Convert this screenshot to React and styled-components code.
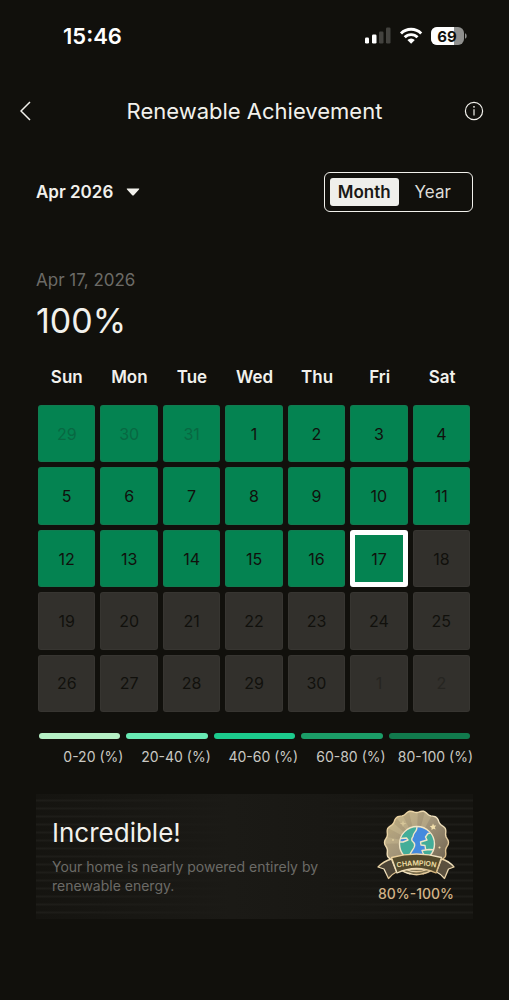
import { useState } from 'react'
import styled, { createGlobalStyle } from 'styled-components'

const weekdays = ['Sun', 'Mon', 'Tue', 'Wed', 'Thu', 'Fri', 'Sat']

// one entry per cell, starting on Sunday Mar 29
const days = Array.from({ length: 35 }, (_, i) => {
    const date = new Date(2026, 2, 29 + i)
    return {
        id: i,
        label: date.getDate(),
        outside: date.getMonth() !== 3,
        filled: i < 20,
    }
})

const levels = [
    { label: '0-20 (%)', color: '#b5f0c5' },
    { label: '20-40 (%)', color: '#68eab4' },
    { label: '40-60 (%)', color: '#1ccb8d' },
    { label: '60-80 (%)', color: '#1b9d68' },
    { label: '80-100 (%)', color: '#117a4d' },
]

const scallop = (cx, cy, radius, depth, lobes) => {
    const points = []
    for (let i = 0; i < 140; i++) {
        const a = (i / 140) * Math.PI * 2
        const r = radius + depth * Math.cos(lobes * (a + Math.PI / 2 + Math.PI / lobes))
        points.push(`${(cx + r * Math.cos(a)).toFixed(2)} ${(cy + r * Math.sin(a)).toFixed(2)}`)
    }
    return `M${points.join('L')}Z`
}

const medalPath = scallop(39.5, 34.5, 31, 1, 14)

const StatusIcons = () => (
    <svg width='102' height='20' viewBox='0 0 102 20' aria-hidden='true'>
        <rect x='0' y='11.500' width='4' height='6' rx='1.2' fill='#fff' />
        <rect x='7' y='8.500' width='4.500' height='9' rx='1.2' fill='#fff' />
        <rect x='14' y='5.500' width='4.500' height='12' rx='1.2' fill='#43423e' />
        <rect x='21' y='1.500' width='4.500' height='16' rx='1.2' fill='#43423e' />
        <g fill='none' stroke='#fff' strokeWidth='2.900'>
            <path d='M36 7.500a14.300 14.300 0 0 1 20.200 0' />
            <path d='M39.700 11.300a9 9 0 0 1 12.800 0' />
        </g>
        <path d='M42.400 14a5.200 5.200 0 0 1 7.400 0L46.100 17.800Z' fill='#fff' />
        <clipPath id='battery'>
            <rect x='66' y='1' width='33' height='18' rx='6' />
        </clipPath>
        <g clipPath='url(#battery)'>
            <rect x='66' y='1' width='33' height='18' fill='#90908e' />
            <rect x='66' y='1' width='23' height='18' fill='#fff' />
        </g>
        <path d='M100 7.200c2.200.8 2.200 4.800 0 5.600Z' fill='#90908e' />
        <text x='82' y='15.500' textAnchor='middle' fontFamily='Inter, sans-serif' fontSize='15' fontWeight='700' fill='#11100c'>69</text>
    </svg>
)

const Badge = () => (
    <svg width='78' height='72' viewBox='0 0 78 72' aria-hidden='true'>
        <defs>
            <linearGradient id='medal' x1='0' y1='0' x2='1' y2='1'>
                <stop offset='0' stopColor='#c4b283' />
                <stop offset='0.45' stopColor='#a19378' />
                <stop offset='1' stopColor='#665a48' />
            </linearGradient>
            <linearGradient id='gold' x1='0' y1='0' x2='1' y2='1'>
                <stop offset='0' stopColor='#e6c88e' />
                <stop offset='0.5' stopColor='#f3e6c6' />
                <stop offset='1' stopColor='#cfa96b' />
            </linearGradient>
            <clipPath id='medalClip'>
                <path d={medalPath} />
            </clipPath>
            <clipPath id='globeClip'>
                <circle cx='40' cy='36' r='17' />
            </clipPath>
            <path id='ribbonText' d='M14 61Q39.500 54 65 61' />
        </defs>

        <path d={medalPath} fill='url(#medal)' />
        <g clipPath='url(#medalClip)' fill='#efe0b0' opacity='0.200'>
            <path d='M39.500 35L31 0H41Z' />
            <path d='M39.500 35L49 0H59Z' />
            <path d='M39.500 35L14 3L22 0Z' />
            <path d='M39.500 35L3 16L8 8Z' />
            <path d='M39.500 35L0 36V27Z' />
        </g>
        <path d={medalPath} fill='none' stroke='url(#gold)' strokeWidth='1.400' />

        <circle cx='40' cy='36' r='17' fill='#448ade' />
        <g clipPath='url(#globeClip)' fill='#43ad98' stroke='#efe6c8' strokeWidth='1.400' strokeLinejoin='round'>
            <path d='M20 14H40.500L39.700 21C39 24 36.300 25 36.300 27.500C36 30 33.500 30.500 35.300 33C38 35 38.500 37 36.800 40C35 43 34 44 32.300 48L20 52V34L26 34L31 32L29.500 30L24 30.500L20 28Z' />
            <path d='M60 24L51 25.500L48.500 29L50 32L43.500 34L44 37L48 37.500L48.500 41L51 43H60Z' />
            <path d='M60 42L52 41.500L45 42.500L46 45L48.500 50H60Z' />
        </g>
        <circle cx='40' cy='36' r='17.500' fill='none' stroke='#f0e5c5' strokeWidth='1.400' />

        <g fill='#f2dfab'>
            <path d='M56 15.500l1 2 2.200-.1-1.400 1.800.8 2.200-2.200-.7-1.900 1.200.1-2.200-1.800-1.400 2.300-.6Z' />
            <path d='M26 12l.8 2.800 2.800.8-2.800.9-.8 2.700-.8-2.700-2.700-.9 2.700-.8Z' opacity='0.500' />
            <circle cx='16' cy='32' r='0.800' />
            <circle cx='62.500' cy='39.500' r='1' />
        </g>

        <g stroke='url(#gold)' strokeWidth='1.300' strokeLinejoin='round'>
            <path d='M24 61Q27 65 33 65.500Q39.500 68 46 65.500Q52 65 55 61Z' fill='#7d704f' />
            <path d='M29 61.500Q39.500 66 50 61.500' fill='none' />
            <path d='M14.500 51Q7 53 1 59L7 61L11.500 70.500Q15 66 19.500 64Z' fill='#4c4436' />
            <path d='M64.500 51Q72 53 77 59L71.500 61L67.500 70.500Q64 66 59.500 64Z' fill='#5b503e' />
            <path d='M14.500 49.500Q39.500 42.500 64.500 49.500L59 65Q39.500 56 20 65Z' fill='#544a2c' />
        </g>
        <text fontFamily='Inter, sans-serif' fontSize='7' fontWeight='600' fill='#f3e0a8' textAnchor='middle'>
            <textPath href='#ribbonText' startOffset='50%'>CHAMPION</textPath>
        </text>
    </svg>
)

const App = () => {
    const [period, setPeriod] = useState('Month')
    const [selected, setSelected] = useState(19)

    return (
        <Page>
            <GlobalStyle />
            <StatusBar>
                <Clock>15:46</Clock>
                <StatusIcons />
            </StatusBar>

            <Header>
                <BackButton aria-label='Back'>
                    <svg width='12' height='20' viewBox='0 0 12 20'>
                        <path d='M10 1L1 10L10 19' fill='none' stroke='currentColor' strokeWidth='1.500' />
                    </svg>
                </BackButton>
                <Title>Renewable Achievement</Title>
                <InfoButton aria-label='Information'>
                    <svg width='20' height='20' viewBox='0 0 20 20'>
                        <circle cx='10' cy='10' r='8.600' fill='none' stroke='currentColor' strokeWidth='1.200' />
                        <path d='M10 8.200V14.500' stroke='currentColor' strokeWidth='1.200' />
                        <circle cx='10' cy='5.800' r='0.900' fill='currentColor' />
                    </svg>
                </InfoButton>
            </Header>

            <Content>
                <Toolbar>
                    <MonthPicker>
                        <MonthSelect aria-label='Month' defaultValue='Apr 2026'>
                            <option>Apr 2026</option>
                        </MonthSelect>
                        <svg width='14' height='8' viewBox='0 0 14 8' aria-hidden='true'>
                            <path d='M1.200.5H12.800Q13.800.6 13 1.400L8 6.900Q7 7.900 6 6.900L1 1.400Q.2.6 1.200.5Z' fill='currentColor' />
                        </svg>
                    </MonthPicker>
                    <Toggle>
                        {['Month', 'Year'].map(name => (
                            <ToggleButton key={name} $active={period === name} aria-pressed={period === name} onClick={() => setPeriod(name)}>
                                {name}
                            </ToggleButton>
                        ))}
                    </Toggle>
                </Toolbar>

                <SelectedDate>Apr 17, 2026</SelectedDate>
                <Percentage>100%</Percentage>

                <Week>
                    {weekdays.map(day => <Weekday key={day}>{day}</Weekday>)}
                </Week>
                <Days>
                    {days.map(day => (
                        <Day
                            key={day.id}
                            $filled={day.filled}
                            $outside={day.outside}
                            $selected={day.id === selected}
                            onClick={() => setSelected(day.id)}
                        >
                            {day.label}
                        </Day>
                    ))}
                </Days>

                <Legend>
                    {levels.map(level => (
                        <LegendItem key={level.label}>
                            <LegendBar $color={level.color} />
                            {level.label}
                        </LegendItem>
                    ))}
                </Legend>

                <Card>
                    <CardText>
                        <CardTitle>Incredible!</CardTitle>
                        <CardBody>Your home is nearly powered entirely by renewable energy.</CardBody>
                    </CardText>
                    <Award>
                        <Badge />
                        <AwardRange>80%-100%</AwardRange>
                    </Award>
                </Card>
            </Content>
        </Page>
    )
}

const GlobalStyle = createGlobalStyle`
    * {
        box-sizing: border-box;
    }

    body {
        margin: 0;
        background-color: #11100c;
    }

    button, select {
        font-family: inherit;
        color: inherit;
        background: none;
        border: none;
        padding: 0;
        cursor: pointer;
    }
`

const Page = styled.main`
    min-height: 100vh;
    padding-bottom: 24px;
    background-color: #11100c;
    color: #f2f1ec;
    font-family: Inter, 'Liberation Sans', sans-serif;
`

const StatusBar = styled.div`
    display: flex;
    align-items: center;
    justify-content: space-between;
    height: 72px;
    padding: 0 42px 0 63px;
`

const Clock = styled.time`
    font-size: 22px;
    font-weight: 600;
    color: #fff;
`

const Header = styled.header`
    display: flex;
    align-items: center;
    justify-content: space-between;
    height: 78px;
    padding: 0 25px 0 20px;
`

const BackButton = styled.button`
    display: flex;
    align-items: center;
    width: 25px;
    height: 40px;
`

const InfoButton = styled(BackButton)`
    width: 20px;
`

const Title = styled.h1`
    margin: 0;
    font-size: 22px;
    font-weight: 400;
`

const Content = styled.div`
    padding: 22px 36px 0;
`

const Toolbar = styled.div`
    display: flex;
    align-items: center;
    justify-content: space-between;
`

const MonthPicker = styled.div`
    position: relative;

    svg {
        position: absolute;
        right: 0;
        top: 16px;
        pointer-events: none;
    }
`

const MonthSelect = styled.select`
    appearance: none;
    height: 40px;
    padding-right: 26px;
    font-size: 17px;
    font-weight: 600;
    outline: none;
`

const Toggle = styled.div`
    display: flex;
    width: 149px;
    height: 40px;
    padding: 5px;
    border: 1px solid #f2f1ec;
    border-radius: 6px;
`

const ToggleButton = styled.button`
    flex: 1;
    border-radius: 3px;
    font-size: 17px;
    font-weight: ${({ $active }) => ($active ? 600 : 400)};
    color: ${({ $active }) => ($active ? '#1a1915' : '#deddd8')};
    background-color: ${({ $active }) => ($active ? '#efefeb' : 'transparent')};
`

const SelectedDate = styled.p`
    margin: 56px 0 0;
    font-size: 17px;
    line-height: 24px;
    color: #6c6b67;
`

const Percentage = styled.p`
    margin: 8px 0 0;
    font-size: 34px;
    line-height: 42px;
`

const Week = styled.div`
    display: grid;
    grid-template-columns: repeat(7, 1fr);
    gap: 5px;
    margin-top: 23px;
    padding: 0 2px;
`

const Weekday = styled.span`
    font-size: 17px;
    font-weight: 600;
    line-height: 24px;
    text-align: center;
`

const Days = styled.div`
    display: grid;
    grid-template-columns: repeat(7, 1fr);
    gap: 5px;
    margin-top: 16px;
    padding: 0 3px 0 2px;
`

const Day = styled.button`
    aspect-ratio: 1;
    border: ${({ $selected }) => ($selected ? '5px solid #fff' : '1px solid rgba(90, 90, 80, 0.15)')};
    border-radius: 3px;
    background-color: ${({ $filled }) => ($filled ? '#048351' : '#32302c')};
    font-size: 16px;
    color: ${({ $filled, $outside }) => ($outside ? ($filled ? '#086842' : '#262521') : '#11100c')};
`

const Legend = styled.div`
    display: grid;
    grid-template-columns: repeat(5, 1fr);
    margin-top: 21px;
`

const LegendItem = styled.div`
    font-size: 14px;
    line-height: 20px;
    text-align: right;
    white-space: nowrap;
    color: #c9c8c3;
`

const LegendBar = styled.div`
    height: 6px;
    margin: 0 3px 8px;
    border-radius: 3px;
    background-color: ${({ $color }) => $color};
`

const Card = styled.section`
    display: flex;
    justify-content: space-between;
    margin-top: 27px;
    padding: 14px 18px 15px 16px;
    background:
        linear-gradient(90deg, rgba(27, 26, 22, 0) 0%, #1b1a16 45%, #191814 65%, rgba(20, 19, 15, 0) 90%),
        repeating-linear-gradient(#151410 0 5px, #1e1d19 6px 7px, #151410 8px);
`

const CardText = styled.div`
    padding-top: 9px;
`

const CardTitle = styled.h2`
    margin: 0;
    font-size: 26px;
    font-weight: 400;
    line-height: 32px;
`

const CardBody = styled.p`
    max-width: 288px;
    margin: 8px 0 0;
    font-size: 14px;
    line-height: 19px;
    color: #6c6b67;
`

const Award = styled.div`
    display: flex;
    flex-direction: column;
    align-items: center;
`

const AwardRange = styled.span`
    margin-top: 4px;
    font-size: 14px;
    font-weight: 500;
    line-height: 20px;
    color: #d3b487;
`

export default App
